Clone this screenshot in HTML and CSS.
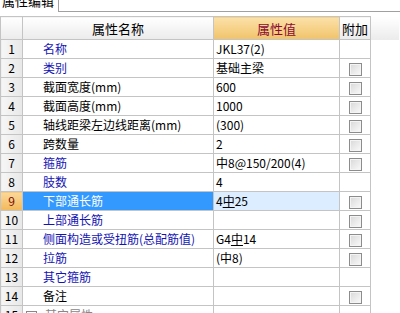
FILE: index.html
```html
<!DOCTYPE html>
<html lang="zh">

<head>
    <meta charset="UTF-8" />
    <title>属性编辑</title>
    <link rel="stylesheet" href="styles.css">
</head>

<body>
    <div class="tabbar">
        <div class="tab"><span>属性编辑</span></div>
        <div class="tab_rest"></div>
    </div>

    <table class="grid">
        <colgroup>
            <col class="c_no" />
            <col class="c_name" />
            <col class="c_val" />
            <col class="c_add" />
            <col />
        </colgroup>
        <thead>
            <tr>
                <th class="no"></th>
                <th>属性名称</th>
                <th class="val_head">属性值</th>
                <th class="add_head">附加</th>
                <th class="blank"></th>
            </tr>
        </thead>
        <tbody>
            <tr>
                <td class="no">1</td>
                <td class="name blue">名称</td>
                <td class="val">JKL37(2)</td>
                <td class="add"></td>
                <td class="blank"></td>
            </tr>
            <tr>
                <td class="no">2</td>
                <td class="name blue">类别</td>
                <td class="val">基础主梁</td>
                <td class="add"><span class="chk"></span></td>
                <td class="blank"></td>
            </tr>
            <tr>
                <td class="no">3</td>
                <td class="name">截面宽度(mm)</td>
                <td class="val">600</td>
                <td class="add"><span class="chk"></span></td>
                <td class="blank"></td>
            </tr>
            <tr>
                <td class="no">4</td>
                <td class="name">截面高度(mm)</td>
                <td class="val">1000</td>
                <td class="add"><span class="chk"></span></td>
                <td class="blank"></td>
            </tr>
            <tr>
                <td class="no">5</td>
                <td class="name">轴线距梁左边线距离(mm)</td>
                <td class="val">(300)</td>
                <td class="add"><span class="chk"></span></td>
                <td class="blank"></td>
            </tr>
            <tr>
                <td class="no">6</td>
                <td class="name">跨数量</td>
                <td class="val">2</td>
                <td class="add"><span class="chk"></span></td>
                <td class="blank"></td>
            </tr>
            <tr>
                <td class="no">7</td>
                <td class="name blue">箍筋</td>
                <td class="val">中8@150/200(4)</td>
                <td class="add"><span class="chk"></span></td>
                <td class="blank"></td>
            </tr>
            <tr>
                <td class="no">8</td>
                <td class="name blue">肢数</td>
                <td class="val">4</td>
                <td class="add"></td>
                <td class="blank"></td>
            </tr>
            <tr class="sel">
                <td class="no">9</td>
                <td class="name">下部通长筋</td>
                <td class="val">4<span class="g3">中</span>25</td>
                <td class="add"><span class="chk"></span></td>
                <td class="blank"></td>
            </tr>
            <tr>
                <td class="no">10</td>
                <td class="name blue">上部通长筋</td>
                <td class="val"></td>
                <td class="add"><span class="chk"></span></td>
                <td class="blank"></td>
            </tr>
            <tr>
                <td class="no">11</td>
                <td class="name blue">侧面构造或受扭筋(总配筋值)</td>
                <td class="val">G4<span class="g3">中</span>14</td>
                <td class="add"><span class="chk"></span></td>
                <td class="blank"></td>
            </tr>
            <tr>
                <td class="no">12</td>
                <td class="name blue">拉筋</td>
                <td class="val">(中8)</td>
                <td class="add"><span class="chk"></span></td>
                <td class="blank"></td>
            </tr>
            <tr>
                <td class="no">13</td>
                <td class="name blue">其它箍筋</td>
                <td class="val"></td>
                <td class="add"></td>
                <td class="blank"></td>
            </tr>
            <tr>
                <td class="no">14</td>
                <td class="name">备注</td>
                <td class="val"></td>
                <td class="add"><span class="chk"></span></td>
                <td class="blank"></td>
            </tr>
            <tr class="group">
                <td class="no">15</td>
                <td class="name group_name"><span class="plus">+</span>其它属性</td>
                <td class="val"></td>
                <td class="add"></td>
                <td class="blank"></td>
            </tr>
        </tbody>
    </table>
</body>

</html>
```

FILE: styles.css
```css
body {
    margin: 0;
    font-family: "Noto Sans CJK SC", "DejaVu Sans", sans-serif;
    font-size: 12px;
    color: #000;
    background-color: #fff;
    overflow: hidden;
}

/* tab strip */
.tabbar {
    display: flex;
    height: 12px;
    margin-bottom: 4px;
}

.tab {
    width: 58px;
    border-right: 1px solid #a0a0a0;
    overflow: hidden;
    background-color: #fff;
}

.tab span {
    display: block;
    margin-top: -7px;
    margin-left: 2px;
    line-height: 16px;
    font-size: 13px;
}

.tab_rest {
    flex: 1;
    border-bottom: 1px solid #a0a0a0;
}

/* property grid */
.grid {
    border-collapse: collapse;
    table-layout: fixed;
    width: 400px;
}

.c_no {
    width: 22px;
}

.c_name {
    width: 191px;
}

.c_val {
    width: 126px;
}

.c_add {
    width: 31px;
}

.grid th,
.grid td {
    border: 1px solid #c4c4c4;
    padding: 0;
    white-space: nowrap;
    overflow: hidden;
}

.grid th {
    height: 22px;
    font-weight: normal;
    font-size: 13px;
    background: linear-gradient(#ffffff, #ebebeb);
}

.grid th.val_head {
    color: #8a0a36;
    background: linear-gradient(#fbe1a8, #f1c36a);
}

.grid th.add_head {
    text-align: left;
    padding-left: 2px;
}

.grid td {
    height: 18px;
    line-height: 18px;
}

.grid .blank {
    border: none;
    background-color: #fff;
}

.grid td.no {
    text-align: center;
    background: linear-gradient(90deg, #f6f6f6, #e8e8e8);
}

.grid td.name {
    padding-left: 20px;
}

.grid td.val {
    padding-left: 2px;
}

.grid td.add {
    text-align: center;
}

.blue {
    color: #1414b4;
}

.g3 {
    text-decoration: underline;
}

.chk {
    display: inline-block;
    width: 11px;
    height: 11px;
    vertical-align: middle;
    border: 1px solid #8c8c8c;
    background: linear-gradient(135deg, #d8d8d8, #fafafa);
    box-shadow: inset 0 0 0 1px #f4f4f4;
}

/* selected row */
.sel td.no {
    background: linear-gradient(#fbd89a, #f3b95a);
    color: #7a1010;
}

.sel td.name {
    background-color: #3399ff;
    color: #fff;
}

.sel td.val {
    background-color: #dcedff;
}

/* group row */
.group td.group_name {
    padding-left: 3px;
    color: #888;
}

.plus {
    display: inline-block;
    width: 9px;
    height: 9px;
    line-height: 9px;
    margin-right: 8px;
    border: 1px solid #888;
    font-size: 9px;
    text-align: center;
    vertical-align: middle;
}
```
